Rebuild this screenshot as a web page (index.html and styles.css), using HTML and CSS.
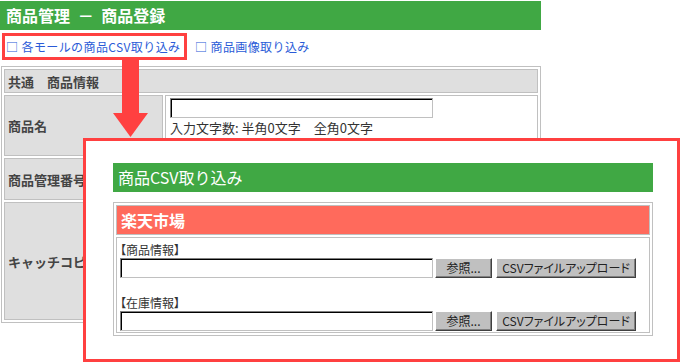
FILE: index.html
```html
<!DOCTYPE html>
<html lang="ja">
  <head>
    <meta charset="UTF-8" />
    <title>商品管理 - 商品登録</title>
    <link rel="stylesheet" href="styles.css">
  </head>
  <body>
    <h1 class="page-title">商品管理 － 商品登録</h1>

    <div class="links">
      <a class="link link-marked" href="#">□ 各モールの商品CSV取り込み</a>
      <a class="link" href="#">□ 商品画像取り込み</a>
    </div>

    <table class="form-table">
      <tr>
        <th colspan="2" class="section">共通　商品情報</th>
      </tr>
      <tr class="row-name">
        <th>商品名</th>
        <td>
          <input type="text" class="text-long" />
          <div class="count">入力文字数: 半角0文字　全角0文字</div>
          <div class="note">※半角100文字、全角50文字以内</div>
        </td>
      </tr>
      <tr class="row-code">
        <th>商品管理番号</th>
        <td><input type="text" class="text-short" /></td>
      </tr>
      <tr class="row-catch">
        <th>キャッチコピー</th>
        <td><textarea class="text-area"></textarea></td>
      </tr>
    </table>

    <!-- arrow from the link to the popup -->
    <svg class="arrow" width="36" height="78" viewBox="0 0 36 78">
      <rect x="9" y="0" width="17" height="54" fill="#ff4040" />
      <polygon points="0,53 35,53 17.5,77" fill="#ff4040" />
    </svg>

    <div class="popup">
      <h2 class="popup-title">商品CSV取り込み</h2>
      <table class="mall-table">
        <tr>
          <th class="mall-name">楽天市場</th>
        </tr>
        <tr>
          <td class="mall-body">
            <div class="group">
              <div class="group-label">【商品情報】</div>
              <div class="upload-row">
                <input type="text" class="file-path" />
                <button class="btn btn-browse">参照...</button>
                <button class="btn btn-upload">CSVファイルアップロード</button>
              </div>
            </div>
            <div class="group">
              <div class="group-label">【在庫情報】</div>
              <div class="upload-row">
                <input type="text" class="file-path" />
                <button class="btn btn-browse">参照...</button>
                <button class="btn btn-upload">CSVファイルアップロード</button>
              </div>
            </div>
          </td>
        </tr>
      </table>
    </div>
  </body>
</html>
```

FILE: styles.css
```css
body {
  margin: 0;
  font-family: "Noto Sans CJK JP", sans-serif;
  font-size: 12px;
  color: #333;
  background: #fff;
  position: relative;
  height: 364px;
  overflow: hidden;
}
.page-title {
  margin: 1px 0 0;
  width: 541px;
  height: 29px;
  box-sizing: border-box;
  padding-left: 6px;
  background: #40a844;
  color: #fff;
  font-size: 16px;
  font-weight: bold;
  line-height: 29px;
  word-spacing: 4px;
}
.links {
  display: flex;
  align-items: center;
  height: 27px;
  margin-top: 3px;
  padding-left: 2px;
}
.link {
  color: #2a5bd7;
  text-decoration: none;
  line-height: 16px;
  letter-spacing: 0.4px;
}
.link-marked {
  display: flex;
  align-items: center;
  width: 185px;
  height: 27px;
  box-sizing: border-box;
  border: 3px solid #ff4040;
  padding-left: 1px;
}
.link-marked + .link {
  margin-left: 8px;
}

/* background form */
.form-table {
  margin: 6px 0 0 1px;
  width: 540px;
  border: 1px solid #c0c0c0;
  border-spacing: 2px;
}
.form-table th,
.form-table td {
  box-sizing: border-box;
  border: 1px solid #c0c0c0;
}
.form-table th {
  background: #dfdfdf;
  color: #444;
  font-size: 13px;
  font-weight: bold;
  text-align: left;
  padding: 0 0 0 3px;
}
.form-table .section {
  height: 24px;
}
.form-table tr th:first-child:not(.section) {
  width: 159px;
}
.form-table td {
  vertical-align: top;
  padding: 2px 4px 0;
  background: #fff;
}
.row-name th,
.row-name td {
  height: 59px;
}
.row-code th,
.row-code td {
  height: 42px;
}
.row-catch th,
.row-catch td {
  height: 118px;
}
.text-long,
.text-short,
.file-path {
  display: block;
  box-sizing: border-box;
  height: 20px;
  margin: 0;
  border: 1px solid;
  border-color: #808080 #c0c0c0 #c0c0c0 #808080;
  box-shadow: inset 1px 1px 0 #000;
  background: #fff;
}
.text-long {
  width: 263px;
}
.text-short {
  width: 160px;
}
.text-area {
  display: block;
  width: 300px;
  height: 80px;
}
.count {
  font-size: 13px;
  line-height: 19px;
}
.note {
  color: #ff3300;
  font-size: 12px;
  line-height: 18px;
}

.arrow {
  position: absolute;
  left: 113px;
  top: 60px;
}

/* popup */
.popup {
  position: absolute;
  left: 83px;
  top: 138px;
  width: 597px;
  height: 224px;
  box-sizing: border-box;
  border: 3px solid #ff4040;
  background: #fff;
  padding: 22px 0 0 27px;
}
.popup-title {
  margin: 0 0 10px;
  width: 540px;
  height: 29px;
  box-sizing: border-box;
  padding-left: 5px;
  background: #40a844;
  color: #fff;
  font-size: 16px;
  font-weight: normal;
  line-height: 29px;
}
.mall-table {
  width: 540px;
  border: 1px solid #c0c0c0;
  border-spacing: 2px;
}
.mall-name {
  height: 30px;
  box-sizing: border-box;
  border: 1px solid #c0c0c0;
  background: #ff6a5c;
  color: #fff;
  font-size: 16px;
  font-weight: bold;
  text-align: left;
  padding: 0 0 0 4px;
}
.mall-body {
  border: 1px solid #c0c0c0;
  padding: 3px 2px 1px 3px;
}
.group + .group {
  margin-top: 16px;
}
.group-label {
  line-height: 17px;
  font-feature-settings: "palt";
}
.upload-row {
  display: flex;
  align-items: center;
  height: 20px;
}
.file-path {
  width: 313px;
}
.btn {
  height: 20px;
  box-sizing: border-box;
  margin: 0 0 0 2px;
  padding: 0;
  border: 1px solid;
  border-color: #fff #404040 #404040 #fff;
  box-shadow: inset -1px -1px 0 #808080;
  background: #c0c0c0;
  color: #222;
  font-family: "Noto Sans CJK JP", sans-serif;
  font-size: 12px;
  font-feature-settings: "palt";
  line-height: 16px;
}
.btn-browse {
  width: 57px;
}
.btn-upload {
  width: 140px;
  margin-left: 4px;
}
```
